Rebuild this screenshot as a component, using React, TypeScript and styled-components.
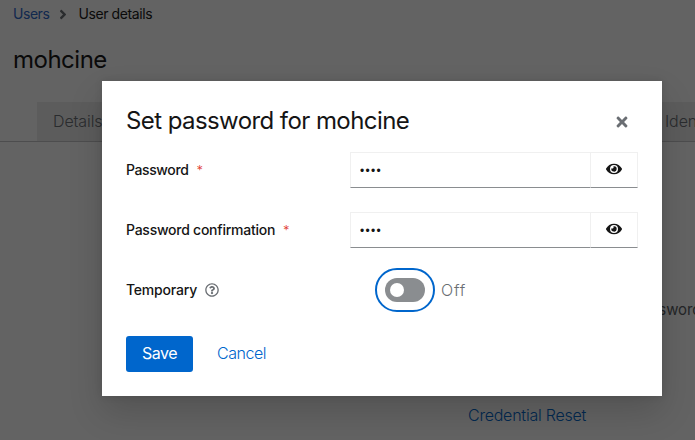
import React, { useState } from "react";
import styled, { createGlobalStyle } from "styled-components";
import { FaAngleRight, FaEye, FaRegQuestionCircle, FaTimes } from "react-icons/fa";

const GlobalStyle = createGlobalStyle`
  *, *::before, *::after { box-sizing: border-box; }
  body {
    margin: 0;
    overflow: hidden;
    font-family: Inter, "Open Sans", sans-serif;
    font-size: 16px;
    color: #151515;
    background: #fff;
  }
  button, input { font: inherit; letter-spacing: inherit; }
  h1, h2, p { margin: 0; font-weight: 400; }
`;

const Page = styled.div`
  position: relative;
  display: flex;
  flex-direction: column;
  width: 695px;
  height: 440px;
  overflow: hidden;
  background: #fff;
`;

const Breadcrumb = styled.nav`
  display: flex;
  align-items: center;
  height: 28px;
  padding-left: 13px;
  font-size: 14px;
  line-height: 28px;
  svg { width: 12px; height: 15px; margin: 0 9px 0 8px; color: #6a6e73; }
`;

const Crumb = styled.a<{ $current?: boolean }>`
  color: ${(p) => (p.$current ? "#151515" : "#2b66c9")};
  letter-spacing: ${(p) => (p.$current ? -0.4 : -0.45)}px;
`;

const PageTitle = styled.h1`
  height: 74px;
  padding: 14px 0 0 13px;
  font-size: 24px;
  line-height: 36px;
  letter-spacing: -0.5px;
`;

const TabBar = styled.div`
  display: flex;
  justify-content: space-between;
  height: 40px;
  padding-left: 37px;
  border-bottom: 1px solid #c4c6c8;
`;

const Tab = styled.div<{ $edge?: boolean }>`
  width: ${(p) => (p.$edge ? "46px" : "120px")};
  padding-left: 16px;
  white-space: nowrap;
  line-height: 39px;
  font-weight: 300;
  letter-spacing: -0.1px;
  color: #6a6e73;
  background: #ededed;
`;

const EmptyState = styled.div`
  display: flex;
  flex-direction: column;
  padding-top: 155px;
  font-weight: 300;
`;

const EmptyText = styled.p`
  align-self: flex-end;
  height: 105px;
  width: 62px;
  line-height: 26px;
  font-size: 15px;
  letter-spacing: -0.1px;
  color: #5a5e63;
`;

const ResetLink = styled.a`
  margin-left: 468px;
  line-height: 26px;
  letter-spacing: -0.23px;
  color: #06c;
`;

const Backdrop = styled.div`
  position: absolute;
  inset: 0;
  padding: 81px 33px 44px 102px;
  background: rgba(3, 3, 3, 0.62);
`;

const Dialog = styled.section`
  width: 560px;
  height: 315px;
  padding: 24px;
  background: #fff;
  box-shadow: 0 16px 32px rgba(3, 3, 3, 0.16), 0 0 8px rgba(3, 3, 3, 0.1);
`;

const DialogHeader = styled.header`
  display: flex;
  align-items: center;
  justify-content: space-between;
  height: 32px;
  margin-bottom: 15px;
`;

const DialogTitle = styled.h2`
  font-size: 24px;
  line-height: 32px;
  letter-spacing: -0.58px;
  white-space: nowrap;
`;

const CloseButton = styled.button`
  display: flex;
  margin-right: 8px;
  padding: 2px 0 0;
  border: 0;
  background: none;
  color: #6a6e73;
  svg { width: 16px; height: 16px; }
`;

const Row = styled.div<{ $gap?: number }>`
  display: grid;
  grid-template-columns: 224px 288px;
  grid-template-rows: 36px;
  align-items: center;
  height: 36px;
  margin-bottom: ${(p) => p.$gap ?? 24}px;
`;

const Label = styled.label`
  display: flex;
  align-items: center;
  font-size: 14px;
  font-weight: 500;
  line-height: 20px;
  white-space: nowrap;
  svg { width: 14px; height: 14px; margin-left: 8px; color: #6a6e73; }
`;

const LabelText = styled.span<{ $spacing: number }>`
  letter-spacing: ${(p) => p.$spacing}px;
`;

const Required = styled.span`
  margin-left: 8px;
  color: #e0352b;
  font-size: 13px;
  font-weight: 300;
`;

const InputGroup = styled.div`
  display: flex;
  height: 36px;
`;

const Input = styled.input`
  width: 241px;
  padding: 2px 9px 0;
  border: 1px solid #f0f0f0;
  border-bottom-color: #8a8d90;
  border-radius: 0;
  outline: none;
  font-family: "Liberation Sans", sans-serif;
  font-size: 12px;
  letter-spacing: 1.3px;
  color: #151515;
`;

const RevealButton = styled.button`
  display: flex;
  align-items: center;
  justify-content: center;
  width: 48px;
  margin-left: -1px;
  padding: 0 0 2px;
  border: 1px solid #f0f0f0;
  border-bottom-color: #8a8d90;
  background: #fff;
  color: #151515;
  svg { width: 16px; height: 16px; }
`;

const SwitchField = styled.div`
  display: flex;
  align-items: center;
  margin-left: 25px;
  font-weight: 300;
  letter-spacing: 0.8px;
  color: #6a6e73;
`;

const FocusRing = styled.button`
  display: flex;
  align-items: center;
  justify-content: center;
  width: 60px;
  height: 44px;
  margin-right: 6px;
  padding: 0;
  border: 2px solid #06c;
  border-radius: 22px;
  background: #fff;
`;

const Track = styled.span<{ $on: boolean }>`
  display: flex;
  align-items: center;
  justify-content: ${(p) => (p.$on ? "flex-end" : "flex-start")};
  width: 40px;
  height: 24px;
  padding: 0 5px;
  border-radius: 12px;
  background: ${(p) => (p.$on ? "#06c" : "#8a8d90")};
`;

const Knob = styled.span`
  width: 14px;
  height: 14px;
  border-radius: 50%;
  background: #fff;
`;

const Actions = styled.footer`
  display: flex;
  gap: 8px;
`;

const Button = styled.button<{ $primary?: boolean }>`
  height: 36px;
  padding: 0 16px 2px;
  width: ${(p) => (p.$primary ? "67px" : "81px")};
  border: 0;
  border-radius: 3px;
  white-space: nowrap;
  font-weight: ${(p) => (p.$primary ? 400 : 300)};
  letter-spacing: -0.45px;
  color: ${(p) => (p.$primary ? "#fff" : "#06c")};
  background: ${(p) => (p.$primary ? "#06c" : "transparent")};
`;

function PasswordField({ label, spacing }: { label: string; spacing: number }) {
  const [value, setValue] = useState("pass");
  const [visible, setVisible] = useState(false);
  return (
    <Row>
      <Label>
        <LabelText $spacing={spacing}>{label}</LabelText>
        <Required>*</Required>
      </Label>
      <InputGroup>
        <Input
          aria-label={label}
          type={visible ? "text" : "password"}
          value={value}
          onChange={(e) => setValue(e.target.value)}
        />
        <RevealButton aria-label="Show password" onClick={() => setVisible(!visible)}>
          <FaEye />
        </RevealButton>
      </InputGroup>
    </Row>
  );
}

export default function App() {
  const [temporary, setTemporary] = useState(false);
  return (
    <>
      <GlobalStyle />
      <Page>
        <Breadcrumb>
          <Crumb>Users</Crumb>
          <FaAngleRight />
          <Crumb $current>User details</Crumb>
        </Breadcrumb>
        <PageTitle>mohcine</PageTitle>
        <TabBar>
          <Tab>Details</Tab>
          <Tab $edge>Iden</Tab>
        </TabBar>
        <EmptyState>
          <EmptyText>password</EmptyText>
          <ResetLink>Credential Reset</ResetLink>
        </EmptyState>
        <Backdrop>
          <Dialog role="dialog" aria-modal="true">
            <DialogHeader>
              <DialogTitle>Set password for mohcine</DialogTitle>
              <CloseButton aria-label="Close">
                <FaTimes />
              </CloseButton>
            </DialogHeader>
            <PasswordField label="Password" spacing={-0.4} />
            <PasswordField label="Password confirmation" spacing={-0.25} />
            <Row $gap={28}>
              <Label>
                <LabelText $spacing={-0.2}>Temporary</LabelText>
                <FaRegQuestionCircle />
              </Label>
              <SwitchField>
                <FocusRing
                  role="switch"
                  aria-label="Temporary"
                  aria-checked={temporary}
                  onClick={() => setTemporary(!temporary)}
                >
                  <Track $on={temporary}>
                    <Knob />
                  </Track>
                </FocusRing>
                {temporary ? "On" : "Off"}
              </SwitchField>
            </Row>
            <Actions>
              <Button $primary>Save</Button>
              <Button>Cancel</Button>
            </Actions>
          </Dialog>
        </Backdrop>
      </Page>
    </>
  );
}
